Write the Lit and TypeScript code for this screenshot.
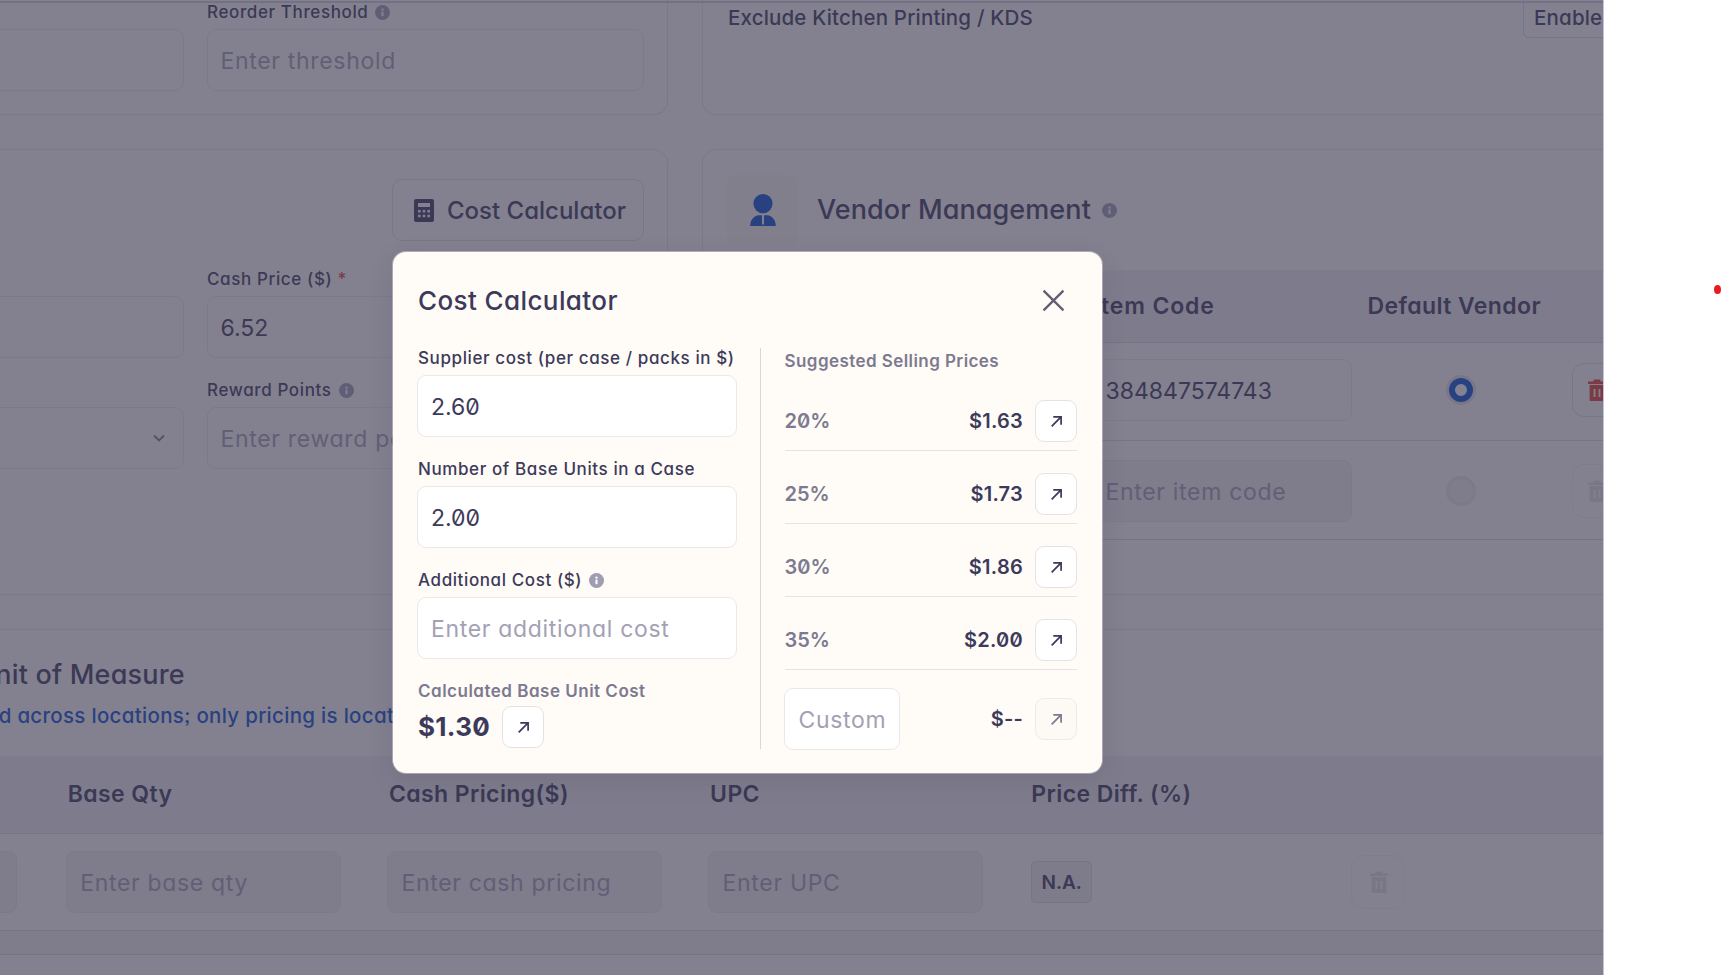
import { LitElement, html, css, svg } from "lit";
import { customElement } from "lit/decorators.js";

const info = (cls = "") => html`<svg class="info ${cls}" viewBox="0 0 16 16"><circle cx="8" cy="8" r="8" fill="#9f9db2"/><rect x="6.9" y="7" width="2.2" height="5" rx=".5" fill="#fffbf6"/><circle cx="8" cy="4.9" r="1.3" fill="#fffbf6"/></svg>`;
const arrow = () => html`<svg class="arrow" viewBox="0 0 14 14"><path d="M2.5 11.5 11 3M4 2.7h7.3V10" fill="none" stroke="currentColor" stroke-width="1.6"/></svg>`;
const trash = () => svg`<path d="M9 1.5h6l.8 2H21v2.6H3V3.500h5.200zM4.600 7h14.800v15a1 1 0 0 1-1 1H5.600a1 1 0 0 1-1-1z" fill="currentColor"/><path d="M9.500 11v8M14.500 11v8" stroke="#fffbf6" stroke-width="1.800"/>`;

@customElement("app-root")
export class AppRoot extends LitElement {
  static styles = css`
    :host { display: block; width: 1722px; height: 975px; overflow: hidden; background: #fff;
      font-family: Inter, "Noto Sans", sans-serif; font-feature-settings: "zero", "cv11", "ss03"; color: #3c3a5a; }
    * { box-sizing: border-box; }
    input { font: inherit; font-feature-settings: inherit; color: inherit; width: 100%; height: 62px; border: 1.5px solid #ece8e8; border-radius: 9px; background: #fffbf6;
      padding: 2px 12.5px 0; font-size: 23px; outline: none; display: block; letter-spacing: 0; }
    input::placeholder { color: #a3a1b3; opacity: 1; letter-spacing: .68px; }
    .frame { display: flex; width: 1722px; height: 975px; position: relative; }
    .stage { width: 1603px; height: 975px; position: relative; overflow: hidden; background: #fffbf6; flex: none; }
    .side { flex: 1; background: #fff; border-left: 1px solid #c4c2d4; }
    .dot { position: absolute; left: 1714px; top: 285px; width: 7px; height: 9px; border-radius: 50%; background: #e8191f; }
    .topline { height: 2px; background: #d4d0d6; position: absolute; top: 1px; left: 0; right: 0; }
    .cols { display: grid; grid-template-columns: 946px 1000px; column-gap: 34px; row-gap: 34px; margin-left: -278px; }
    .card { border: 1.5px solid #e8e4e4; border-radius: 14px; }
    .card.head { height: 115px; border-top: 0; border-top-left-radius: 0; border-top-right-radius: 0; padding: 2px 23px 0; }
    .card.head.kcard { padding: 0; }
    .form { display: grid; grid-template-columns: 438px 437px; column-gap: 23px; row-gap: 22px; }
    .label { height: 20px; line-height: 20px; font-size: 17px; font-weight: 500; margin-bottom: 7px; display: flex; align-items: center; gap: 7px; white-space: nowrap; letter-spacing: .62px; }
    .req { color: #e8402f; }
    .info { width: 15px; height: 15px; flex: none; }
    .price { height: 446px; padding: 29px 23px 0; }
    .btnrow { display: flex; justify-content: flex-end; margin: 0 0 28px 0; }
    .calcbtn { width: 252px; height: 62px; border: 1.5px solid #e3dfe0; border-radius: 10px; display: flex; align-items: center; gap: 13px; padding-left: 21px; font-size: 24px; font-weight: 500; }
    .calcbtn svg { width: 20px; height: 23px; flex: none; }
    .select { height: 62px; border: 1.5px solid #ece8e8; border-radius: 9px; display: flex; justify-content: flex-end; align-items: center; padding-right: 16px; }
    .select svg { width: 16px; height: 16px; }
    .ktitle { display: grid; grid-template-columns: 795px auto; padding-left: 25px; font-size: 20.5px; font-weight: 500; line-height: 36px; letter-spacing: .17px; height: 38px; }
    .kbtn { border: 1.5px solid #dcd8dc; border-top: 0; border-radius: 0 0 6px 6px; padding-left: 10px; }
    .vhead { display: flex; padding: 25px 0 0 24px; height: 120px; align-items: flex-start; }
    .vicon { width: 71px; height: 70px; background: #fbf7f2; border-radius: 8px; display: flex; align-items: center; justify-content: center; margin-right: 19px; }
    .vicon svg { width: 26px; height: 32px; }
    .h2 { font-size: 27px; font-weight: 500; letter-spacing: .08px; line-height: 34px; white-space: nowrap; }
    .vtitle { display: flex; align-items: center; gap: 11px; height: 70px; }
    .ftitle.h2 { letter-spacing: .2px; }
    .blue { color: #0a4fd0; }
    .vtable { display: grid; grid-template-columns: 388.5px 276px 204px 150px; }
    .vtable > * { min-width: 0; }
    .band { background: #f2eeee; }
    .th { font-size: 23px; font-weight: 600; letter-spacing: .4px; display: flex; align-items: center; white-space: nowrap; }
    .vband { grid-column: 1 / -1; height: 72px; display: grid; grid-template-columns: subgrid; }
    .vband .th:first-child { padding-left: 24px; }
    .vband .th:nth-child(2) { padding-left: 2px; letter-spacing: .85px; }
    .vrow { grid-column: 1 / -1; display: grid; grid-template-columns: subgrid; border-top: 1.5px solid #dcd8dc; align-items: center; }
    .vrow input { width: 260px; padding-left: 13px; }
    .vrow.one { height: 98px; padding-bottom: 4px; }
    .vrow.two { height: 100px; padding-top: 2px; border-bottom: 1.5px solid #dcd8dc; }
    .dis { background: #f3efee; }
    .radio { width: 30px; height: 30px; border-radius: 50%; margin-left: 78px; border: 3px solid #e5e1e2; display: flex; align-items: center; justify-content: center; }
    .radio i { display: block; width: 24px; height: 24px; border-radius: 50%; border: 6.500px solid #0a4fd0; background: #fff; }
    .radio.off { background: #f3efee; border-color: #ece8e8; }
    .del { width: 54px; height: 54px; border: 1.5px solid #f2d9d2; border-radius: 12px; display: flex; align-items: center; padding-left: 12px; color: #e8402f; }
    .del svg { width: 24px; height: 24px; flex: none; }
    .del.off { color: #e4e0e2; border-color: #f3efee; }
    .full { grid-column: 1 / -1; height: 327px; border-width: 1.5px 0 0 0; border-radius: 0; padding-top: 28px; }
    .ftitle { padding-left: 253px; }
    .fnote { padding-left: 113px; margin-top: 12px; line-height: 24px; font-size: 20.5px; font-weight: 500; letter-spacing: .3px; white-space: nowrap; }
    .utable { margin-top: 28px; border-bottom: 1.5px solid #d9d5da; }
    .ugrid { display: grid; grid-template-columns: repeat(6, 321.2px); padding-left: 22.5px; }
    .uhead { height: 78px; border-bottom: 1.5px solid #d9d5da; align-items: center; padding-bottom: 2px; }
    .uhead .th { padding-left: 2px; }
    .urow { height: 97px; border-bottom: 1.5px solid #d9d5da; align-items: center; }
    .urow input { width: 275px; padding-left: 13.5px; }
    .urow input:first-child { width: 272px; }
    .urow .del { padding-left: 15px; margin-left: 1px; }
    .utail { height: 23px; background: #f4f0ef; }
    .nacell { padding-left: 2px; }
    .na { display: inline-flex; height: 42px; width: 61px; align-items: center; justify-content: center; background: #f1ece9; border: 1.5px solid #dcd8dc; border-radius: 5px; font-size: 19px; font-weight: 600; }
    .overlay { position: absolute; inset: 0; background: rgba(58, 57, 82, .63); }
    .modal { position: absolute; left: 393px; top: 252px; width: 709px; height: 521px; background: #fffbf6; border-radius: 13px; padding: 30px 25px 0 24px; box-shadow: 0 0 0 1px rgba(255,255,255,.35), 0 8px 26px rgba(40,38,70,.12); }
    .mhead { display: flex; justify-content: space-between; align-items: center; height: 36px; padding-left: 1px; }
    .mtitle { font-size: 26px; font-weight: 450; letter-spacing: .4px; }
    .close { width: 23px; height: 23px; color: #605e74; margin-right: 12px; }
    .mbody { display: grid; grid-template-columns: 344px 1fr; margin-top: 30px; }
    .mleft { border-right: 1.5px solid #d9d5de; padding-right: 24px; height: 401px; width: 344px; }
    .mlabel { height: 20px; line-height: 20px; font-size: 17px; font-weight: 500; display: flex; align-items: center; gap: 7px; letter-spacing: .6px; white-space: nowrap; margin: 0 0 7px 1px; }
    .mlabel.muted { font-weight: 600; letter-spacing: .5px; }
    .mleft input { background: #fff; width: 320px; margin-bottom: 22px; padding-left: 13px; }
    .muted { color: #7c7a90; }
    .cost { display: flex; align-items: center; gap: 12px; margin-left: 1px; margin-top: -2px; }
    .cost b { font-size: 26px; font-weight: 700; letter-spacing: .3px; margin-bottom: 2px; }
    .go { width: 42px; height: 42px; border: 1.5px solid #e6e2e4; border-radius: 9px; background: #fff; display: flex; align-items: center; justify-content: center; flex: none; }
    .go .arrow { width: 15px; height: 15px; }
    .go.off { background: #fdf9f5; border-color: #eeeaea; color: #7c7a90; }
    .mright { padding-left: 23.5px; }
    .stitle { height: 28px; line-height: 28px; font-size: 17px; font-weight: 600; letter-spacing: .43px; margin: -1px 0 25px; color: #7c7a90; white-space: nowrap; }
    .srow { height: 51px; border-bottom: 1.5px solid #e6e3e6; margin-bottom: 22px; display: flex; align-items: flex-start; }
    .srow:nth-of-type(5) { margin-bottom: 18px; }
    .pct { font-size: 20px; font-weight: 600; color: #7c7a90; line-height: 42px; margin-right: auto; }
    .amt { font-size: 20px; font-weight: 600; line-height: 42px; margin-right: 12px; letter-spacing: .25px; }
    .srow.last { border: 0; margin: 0; height: 62px; align-items: center; }
    .srow.last input { width: 116px; background: #fff; margin-left: -1px; margin-right: auto; padding: 2px 14px 0; }
  `;

  private srow(pct: string, amt: string) {
    return html`<div class="srow"><span class="pct">${pct}</span><span class="amt">${amt}</span><div class="go">${arrow()}</div></div>`;
  }

  private inputField(label: unknown, ph: string, val = "") {
    return html`<div><div class="label">${label}</div><input placeholder=${ph} .value=${val} /></div>`;
  }

  render() {
    return html`<div class="frame">
      <div class="stage">
        <div class="topline"></div>
        <div class="cols">
          <section class="card head">
            <div class="form">
              ${this.inputField("Minimum Stock", "")}
              ${this.inputField(html`Reorder Threshold ${info()}`, "Enter threshold")}
            </div>
          </section>
          <section class="card head kcard">
            <div class="ktitle"><span>Exclude Kitchen Printing / KDS</span><span class="kbtn">Enabled</span></div>
          </section>

          <section class="card price">
            <div class="btnrow"><div class="calcbtn">
              <svg viewBox="0 0 20 23"><path fill-rule="evenodd" d="M2 0h16a2 2 0 0 1 2 2v19a2 2 0 0 1-2 2H2a2 2 0 0 1-2-2V2a2 2 0 0 1 2-2zm2 4v4h12V4zm0 7v2.400h2.600V11zm4.700 0v2.400h2.600V11zm4.700 0v2.400H16V11zM4 15.800v2.400h2.600v-2.400zm4.700 0v2.400h2.600v-2.400zm4.700 0v2.400H16v-2.400z" fill="#3c3a5a"/></svg>
              Cost Calculator</div></div>
            <div class="form">
              ${this.inputField("Sale Price ($)", "")}
              ${this.inputField(html`<span>Cash Price ($) <span class="req">*</span></span>`, "", "6.52")}
              <div><div class="label">Category</div><div class="select"><svg viewBox="0 0 16 16"><path d="M3 5.500l5 5 5-5" fill="none" stroke="#7c7a90" stroke-width="1.800"/></svg></div></div>
              ${this.inputField(html`Reward Points ${info()}`, "Enter reward points")}
            </div>
          </section>
          <section class="card">
            <div class="vhead">
              <div class="vicon blue"><svg viewBox="0 0 24 30"><circle cx="12" cy="9" r="9" fill="currentColor"/><path fill-rule="evenodd" d="M7 20h10c4.500 1.500 7 5 7 10H0c0-5 2.500-8.500 7-10zM11 20v8.500h2V20z" fill="currentColor"/></svg></div>
              <div class="vtitle h2">Vendor Management ${info()}</div>
            </div>
            <div class="vtable">
              <div class="vband band"><div class="th">Vendor</div><div class="th">Item Code</div><div class="th">Default Vendor</div><div class="th"></div></div>
              <div class="vrow one"><div></div><input value="384847574743"/><div class="radio"><i></i></div><div class="del"><svg viewBox="0 0 24 24">${trash()}</svg></div></div>
              <div class="vrow two"><div></div><input class="dis" placeholder="Enter item code"/><div class="radio off"></div><div class="del off"><svg viewBox="0 0 24 24">${trash()}</svg></div></div>
            </div>
          </section>

          <section class="card full">
            <div class="ftitle h2">Unit of Measure</div>
            <div class="fnote blue">UOMs are shared across locations; only pricing is location-specific.</div>
            <div class="utable">
              <div class="ugrid uhead band">
                <div class="th">Unit</div><div class="th">Base Qty</div><div class="th">Cash Pricing($)</div><div class="th">UPC</div><div class="th">Price Diff. (%)</div><div class="th"></div>
              </div>
              <div class="ugrid urow">
                <input class="dis" placeholder=""/>
                <input class="dis" placeholder="Enter base qty"/>
                <input class="dis" placeholder="Enter cash pricing"/>
                <input class="dis" placeholder="Enter UPC"/>
                <div class="nacell"><span class="na">N.A.</span></div>
                <div class="del off"><svg viewBox="0 0 24 24">${trash()}</svg></div>
              </div>
              <div class="utail band"></div>
            </div>
          </section>
        </div>
        <div class="overlay"></div>
        <div class="modal">
          <div class="mhead"><div class="mtitle">Cost Calculator</div>
            <svg class="close" viewBox="0 0 22 22"><path d="M1.500 1.500l19 19M20.500 1.500l-19 19" stroke="currentColor" stroke-width="2.200" fill="none"/></svg></div>
          <div class="mbody">
            <div class="mleft">
              <div class="mlabel">Supplier cost (per case / packs in $)</div>
              <input .value=${"2.60"} />
              <div class="mlabel">Number of Base Units in a Case</div>
              <input .value=${"2.00"} />
              <div class="mlabel">Additional Cost ($) ${info()}</div>
              <input placeholder="Enter additional cost" />
              <div class="mlabel muted">Calculated Base Unit Cost</div>
              <div class="cost"><b>$1.30</b><div class="go">${arrow()}</div></div>
            </div>
            <div class="mright">
              <div class="stitle">Suggested Selling Prices</div>
              ${this.srow("20%", "$1.63")}
              ${this.srow("25%", "$1.73")}
              ${this.srow("30%", "$1.86")}
              ${this.srow("35%", "$2.00")}
              <div class="srow last"><input placeholder="Custom"/><span class="amt">$--</span><div class="go off">${arrow()}</div></div>
            </div>
          </div>
        </div>
      </div>
      <div class="side"></div>
      <div class="dot"></div>
    </div>`;
  }
}
